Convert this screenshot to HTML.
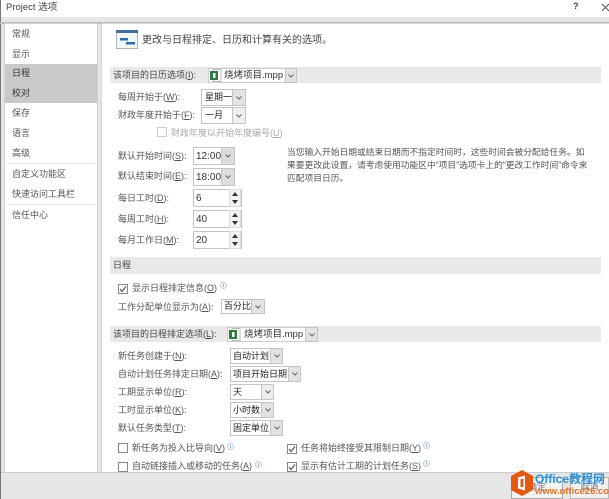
<!DOCTYPE html>
<html><head><meta charset="utf-8">
<style>
html,body{margin:0;padding:0;width:609px;height:499px;overflow:hidden;background:#e6e6e6}
body{position:relative;font-family:"Liberation Sans","Noto Sans CJK SC",sans-serif;font-size:9px;color:#555}
#w{position:absolute;left:0;top:0;width:609px;height:499px;filter:blur(.3px)}
.a{position:absolute;white-space:nowrap}
.t{position:absolute;white-space:nowrap;line-height:14px;height:14px}
.s{color:#555;font-size:9px}
.h{color:#444;font-size:9px}
.side{left:12px;color:#555;font-size:9px}
.band{position:absolute;left:110px;width:491px;background:#e9e9e9}
.b{position:absolute;background:#fff;border:1px solid #c4c4c4;box-sizing:border-box;color:#222;font-size:9px;line-height:14px;padding:0 2px;white-space:nowrap;overflow:hidden}
.n{font-size:10px;padding:2px 2px;line-height:13px;color:#333}
.c{position:absolute;background:#e3e3e3;border:1px solid #c4c4c4;box-sizing:border-box}
.c svg{position:absolute;left:50%;top:50%;margin:-2px 0 0 -3px}
.sp{position:absolute;width:12px;height:18px;background:#f2f2f2;border:1px solid #ddd;box-sizing:border-box}
.sp:before{content:"";position:absolute;left:2px;top:2px;border:3px solid transparent;border-top:0;border-bottom:4px solid #333}
.sp:after{content:"";position:absolute;left:2px;bottom:2px;border:3px solid transparent;border-bottom:0;border-top:4px solid #333}
.cb{position:absolute;width:8px;height:8px;border:1px solid #888;background:#fff;box-sizing:content-box}
.i{position:absolute;width:5px;height:5px;border:1px solid #b5cfe6;border-radius:50%;background:#fff}
.i:after{content:"";position:absolute;left:2px;top:1px;width:1px;height:3px;background:#8fb5d8}
u{text-decoration:underline}
</style></head><body><div id="w">
<div class="a" style="left:0;top:0;width:609px;height:17px;background:#fff"></div>
<div class="a" style="left:0;top:0;width:1px;height:499px;background:#777"></div>
<div class="a" style="left:6px;top:0;line-height:15px;font-size:9.5px;color:#444">Project 选项</div>
<div class="a" style="left:573px;top:0;line-height:13px;font-size:9px;color:#444;font-weight:bold">?</div>
<svg class="a" style="left:601px;top:3px" width="8" height="9"><path d="M1 1L8 8M8 1L1 8" stroke="#555" fill="none"/></svg>
<div class="a" style="left:0;top:22px;width:609px;height:2px;background:#bdbdbd"></div>

<div class="a" style="left:5px;top:24px;width:92px;height:448px;background:#fff;box-shadow:0 0 0 1px #d0d0d0"></div>
<div class="a" style="left:5px;top:64px;width:92px;height:39px;background:#c9c9c9"></div>
<div class="t side" style="top:27px">常规</div>
<div class="t side" style="top:47px">显示</div>
<div class="t side" style="top:66px;color:#333">日程</div>
<div class="t side" style="top:86px;color:#333">校对</div>
<div class="t side" style="top:106px">保存</div>
<div class="t side" style="top:126px">语言</div>
<div class="t side" style="top:146px">高级</div>
<div class="a" style="left:7px;top:163px;width:88px;height:1px;background:#e0e0e0"></div>
<div class="t side" style="top:167px">自定义功能区</div>
<div class="t side" style="top:187px">快速访问工具栏</div>
<div class="a" style="left:7px;top:204px;width:88px;height:1px;background:#e0e0e0"></div>
<div class="t side" style="top:208px">信任中心</div>

<div class="a" style="left:102px;top:24px;width:507px;height:448px;background:#fff;box-shadow:0 0 0 1px #d8d8d8"></div>

<svg class="a" style="left:116px;top:30px" width="22" height="19"><rect x=".5" y=".5" width="21" height="18" fill="#f4f7fa" stroke="#a9b6c4"/><rect x="0" y="0" width="22" height="3" fill="#3f6f9f"/><rect x="4" y="8" width="8" height="2.5" fill="#2d6ea8"/><rect x="10" y="12" width="9" height="2.5" fill="#2d6ea8"/></svg>
<div class="a" style="left:142px;top:33px;line-height:16px;font-size:10px;color:#444">更改与日程排定、日历和计算有关的选项。</div>

<div class="band" style="top:67px;height:16px"></div>
<div class="t h" style="left:113px;top:68px">该项目的日历选项(<u>I</u>):</div>
<div class="a" style="left:208px;top:68px;width:89px;height:15px;background:#fff;border:1px solid #ccc;box-sizing:border-box"></div>
<svg class="a" style="left:210px;top:69px" width="12" height="13"><rect x="3" y=".5" width="8" height="12" fill="#fff" stroke="#bbb"/><rect x="0" y="2" width="8" height="9" fill="#2f7a3e"/><rect x="3" y="4" width="2.5" height="5" fill="#fff"/></svg>
<div class="t" style="left:224px;top:69px;color:#333;font-size:9.5px">烧烤项目.mpp</div>
<div class="c" style="left:285px;top:68px;width:12px;height:15px"><svg width="6" height="4"><path d="M.5 .5L3 3L5.500 .5" fill="none" stroke="#666"/></svg></div>

<div class="t s" style="left:118px;top:90px">每周开始于(<u>W</u>):</div>
<div class="b" style="left:201px;top:89px;width:45px;height:17px;padding-left:3px">星期一</div>
<div class="c" style="left:232px;top:89px;width:14px;height:17px"><svg width="6" height="4"><path d="M.5 .5L3 3L5.500 .5" fill="none" stroke="#666"/></svg></div>
<div class="t s" style="left:118px;top:108px">财政年度开始于(<u>F</u>):</div>
<div class="b" style="left:201px;top:107px;width:45px;height:17px;padding-left:3px">一月</div>
<div class="c" style="left:232px;top:107px;width:14px;height:17px;background:#eee"><svg width="6" height="4"><path d="M.5 .5L3 3L5.500 .5" fill="none" stroke="#666"/></svg></div>
<div class="cb" style="left:157px;top:127px;border-color:#ccc"></div>
<div class="t" style="left:171px;top:126px;color:#aaa;font-size:9px">财政年度以开始年度编号(<u>U</u>)</div>

<div class="t s" style="left:118px;top:149px">默认开始时间(<u>S</u>):</div>
<div class="b n" style="left:193px;top:147px;width:42px;height:18px">12:00</div>
<div class="c" style="left:221px;top:147px;width:14px;height:18px;background:#ddd"><svg width="6" height="4"><path d="M.5 .5L3 3L5.500 .5" fill="none" stroke="#666"/></svg></div>
<div class="t s" style="left:118px;top:169px">默认结束时间(<u>E</u>):</div>
<div class="b n" style="left:193px;top:168px;width:42px;height:18px">18:00</div>
<div class="c" style="left:221px;top:168px;width:14px;height:18px;background:#ddd"><svg width="6" height="4"><path d="M.5 .5L3 3L5.500 .5" fill="none" stroke="#666"/></svg></div>
<div class="t s" style="left:118px;top:191px">每日工时(<u>D</u>):</div>
<div class="b n" style="left:193px;top:189px;width:49px;height:18px">6</div><div class="sp" style="left:229px;top:189px"></div>
<div class="t s" style="left:118px;top:212px">每周工时(<u>H</u>):</div>
<div class="b n" style="left:193px;top:210px;width:49px;height:18px">40</div><div class="sp" style="left:229px;top:210px"></div>
<div class="t s" style="left:118px;top:233px">每月工作日(<u>M</u>):</div>
<div class="b n" style="left:193px;top:231px;width:49px;height:18px">20</div><div class="sp" style="left:229px;top:231px"></div>

<div class="a" style="left:287px;top:146px;line-height:13px;font-size:8.75px;color:#555">当您输入开始日期或结束日期而不指定时间时，这些时间会被分配给任务。如<br>果要更改此设置，请考虑使用功能区中“项目”选项卡上的“更改工作时间”命令来<br>匹配项目日历。</div>

<div class="band" style="top:257px;height:17px"></div>
<div class="t h" style="left:113px;top:258px">日程</div>
<div class="cb" style="left:118px;top:284px"></div>
<svg class="a" style="left:118px;top:284px" width="10" height="10"><path d="M2 5L4 7.500L8 2.500" fill="none" stroke="#555" stroke-width="1.200"/></svg>
<div class="t s" style="left:132px;top:281px">显示日程排定信息(<u>O</u>)</div><div class="i" style="left:220px;top:282px"></div>
<div class="t s" style="left:118px;top:300px">工作分配单位显示为(<u>A</u>):</div>
<div class="b" style="left:221px;top:299px;width:44px;height:15px;line-height:13px">百分比</div>
<div class="c" style="left:251px;top:299px;width:14px;height:15px"><svg width="6" height="4"><path d="M.5 .5L3 3L5.500 .5" fill="none" stroke="#666"/></svg></div>

<div class="band" style="top:326px;height:16px"></div>
<div class="t h" style="left:113px;top:327px">该项目的日程排定选项(<u>L</u>):</div>
<div class="a" style="left:227px;top:327px;width:91px;height:15px;background:#fff;border:1px solid #ccc;box-sizing:border-box"></div>
<svg class="a" style="left:229px;top:328px" width="12" height="13"><rect x="3" y=".5" width="8" height="12" fill="#fff" stroke="#bbb"/><rect x="0" y="2" width="8" height="9" fill="#2f7a3e"/><rect x="3" y="4" width="2.5" height="5" fill="#fff"/></svg>
<div class="t" style="left:244px;top:328px;color:#333;font-size:9.5px">烧烤项目.mpp</div>
<div class="c" style="left:305px;top:327px;width:13px;height:15px"><svg width="6" height="4"><path d="M.5 .5L3 3L5.500 .5" fill="none" stroke="#666"/></svg></div>

<div class="t s" style="left:118px;top:349px">新任务创建于(<u>N</u>):</div>
<div class="b" style="left:230px;top:348px;width:53px;height:16px">自动计划</div>
<div class="c" style="left:270px;top:348px;width:13px;height:16px"><svg width="6" height="4"><path d="M.5 .5L3 3L5.500 .5" fill="none" stroke="#666"/></svg></div>
<div class="t s" style="left:118px;top:367px">自动计划任务排定日期(<u>A</u>):</div>
<div class="b" style="left:230px;top:366px;width:71px;height:16px">项目开始日期</div>
<div class="c" style="left:288px;top:366px;width:13px;height:16px"><svg width="6" height="4"><path d="M.5 .5L3 3L5.500 .5" fill="none" stroke="#666"/></svg></div>
<div class="t s" style="left:118px;top:385px">工期显示单位(<u>R</u>):</div>
<div class="b" style="left:230px;top:384px;width:44px;height:16px">天</div>
<div class="c" style="left:261px;top:384px;width:13px;height:16px;background:#eee"><svg width="6" height="4"><path d="M.5 .5L3 3L5.500 .5" fill="none" stroke="#666"/></svg></div>
<div class="t s" style="left:118px;top:403px">工时显示单位(<u>K</u>):</div>
<div class="b" style="left:230px;top:402px;width:44px;height:16px">小时数</div>
<div class="c" style="left:261px;top:402px;width:13px;height:16px"><svg width="6" height="4"><path d="M.5 .5L3 3L5.500 .5" fill="none" stroke="#666"/></svg></div>
<div class="t s" style="left:118px;top:421px">默认任务类型(<u>T</u>):</div>
<div class="b" style="left:230px;top:420px;width:53px;height:16px">固定单位</div>
<div class="c" style="left:270px;top:420px;width:13px;height:16px"><svg width="6" height="4"><path d="M.5 .5L3 3L5.500 .5" fill="none" stroke="#666"/></svg></div>

<div class="cb" style="left:118px;top:443px"></div>
<div class="t s" style="left:132px;top:441px">新任务为投入比导向(<u>V</u>)</div><div class="i" style="left:227px;top:443px"></div>
<div class="cb" style="left:118px;top:462px"></div>
<div class="t s" style="left:132px;top:459px">自动链接插入或移动的任务(<u>A</u>)</div><div class="i" style="left:255px;top:461px"></div>
<div class="cb" style="left:287px;top:444px"></div>
<svg class="a" style="left:287px;top:444px" width="10" height="10"><path d="M2 5L4 7.500L8 2.500" fill="none" stroke="#555" stroke-width="1.200"/></svg>
<div class="t s" style="left:301px;top:441px">任务将始终接受其限制日期(<u>Y</u>)</div><div class="i" style="left:423px;top:442px"></div>
<div class="cb" style="left:287px;top:462px"></div>
<svg class="a" style="left:287px;top:462px" width="10" height="10"><path d="M2 5L4 7.500L8 2.500" fill="none" stroke="#555" stroke-width="1.200"/></svg>
<div class="t s" style="left:301px;top:459px">显示有估计工期的计划任务(<u>S</u>)</div><div class="i" style="left:423px;top:460px"></div>

<div class="a" style="left:0;top:472px;width:609px;height:27px;background:#e6e6e6;border-top:1px solid #ccc;box-sizing:border-box"></div>
<div class="a" style="left:0;top:472px;width:1px;height:27px;background:#777"></div>
<div class="a" style="left:511px;top:477px;width:52px;height:22px;background:#f2f2f2;border:1px solid #aaa;box-sizing:border-box;text-align:center;font-size:9px;line-height:18px;color:#777">确定</div>
<div class="a" style="left:570px;top:477px;width:39px;height:22px;background:#f2f2f2;border:1px solid #bbb;box-sizing:border-box;text-align:center;font-size:9px;line-height:18px;color:#777">取消</div>
<svg class="a" style="left:510px;top:469px" width="24" height="28"><path d="M12 1L23 7V21L12 27L1 21V7Z" fill="#e2590f"/><path d="M8 8.500L15 6.500V21.500L8 19.500Z" fill="#fff"/><rect x="10.500" y="10" width="3" height="8" fill="#e2590f"/></svg>
<div class="a" style="left:535px;top:472px;line-height:14px;font-size:12px;font-weight:bold;color:#2e8fd6">Office教程网</div>
<div class="a" style="left:535px;top:486px;line-height:11px;font-size:9.5px;font-weight:bold;color:#e2702a">www.office26.com</div>
</div></body></html>
